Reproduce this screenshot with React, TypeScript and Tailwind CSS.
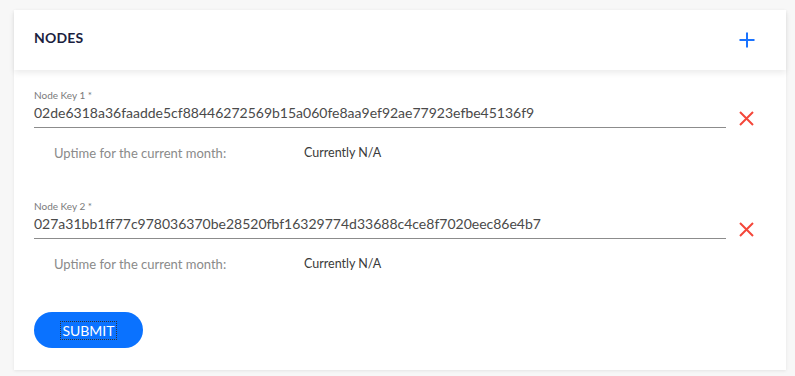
import React from "react";

const nodes = [
  { label: "Node Key 1 *", value: "02de6318a36faadde5cf88446272569b15a060fe8aa9ef92ae77923efbe45136f9" },
  { label: "Node Key 2 *", value: "027a31bb1ff77c978036370be28520fbf16329774d33688c4ce8f7020eec86e4b7" },
];

const PlusIcon = () => (
  <svg width="16" height="16" viewBox="0 0 16 16">
    <path d="M8 0.5v15M0.5 8h15" stroke="#1a73ff" strokeWidth="2" />
  </svg>
);

const CloseIcon = () => (
  <svg width="15" height="15" viewBox="0 0 15 15">
    <path d="M1 1l13 13M14 1L1 14" stroke="#f4473a" strokeWidth="2" />
  </svg>
);

const NodeRow = ({ label, value }: { label: string; value: string }) => (
  <div className="pt-[17px] pb-[18px]">
    <div className="flex items-start">
      <div className="flex-1 border-b border-[#8c8c8c] pb-[4px]">
        <div className="text-[10px] leading-[16px] text-[#7a7a7a]">{label}</div>
        <div className="text-[14px] leading-[20px] text-[#4a4a4a]">{value}</div>
      </div>
      <button className="ml-[13px] mt-[24px] mr-[32px]">
        <CloseIcon />
      </button>
    </div>
    <div className="flex pl-[20px] pt-[15px] leading-[20px]">
      <div className="w-[250px] text-[13px] text-[#8a8a8a]">Uptime for the current month:</div>
      <div className="text-[12.5px] text-[#3a3a3a]">Currently N/A</div>
    </div>
  </div>
);

export default function App() {
  return (
    <div className="min-h-[376px] bg-[#f7f7f7] pl-[14px] pr-[9px] pt-[10px] pb-[7px]" style={{ fontFamily: "Lato, 'Open Sans', sans-serif" }}>
      <div className="bg-white shadow-[0_1px_3px_rgba(0,0,0,0.08)]">
        <div className="relative z-10 flex h-[60px] items-start justify-between bg-white pl-[20px] pr-[31px] shadow-[0_3px_6px_rgba(0,0,0,0.08)]">
          <h2 className="pt-[18px] text-[14px] leading-[20px] font-bold tracking-[0.2px] text-[#1b1f3f]">NODES</h2>
          <button className="pt-[22px]">
            <PlusIcon />
          </button>
        </div>
        <div className="pl-[20px] pb-[22px]">
          {nodes.map((n) => (
            <NodeRow key={n.label} label={n.label} value={n.value} />
          ))}
          <div className="pt-[20px]">
            <button className="flex h-[36px] w-[109px] items-center justify-center rounded-full bg-[#0a72ff] text-[14px] text-white">
              <span className="outline-1 outline-dotted outline-[#333] px-[1px] leading-[17px]">SUBMIT</span>
            </button>
          </div>
        </div>
      </div>
    </div>
  );
}
